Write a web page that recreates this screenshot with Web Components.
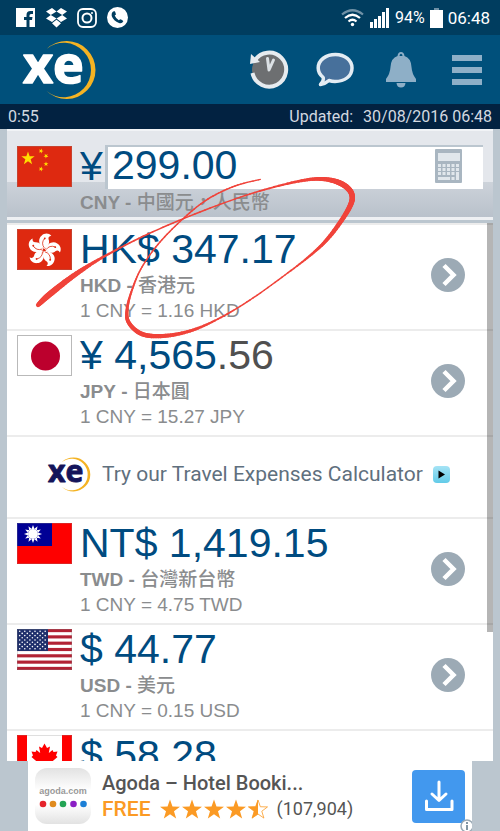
<!DOCTYPE html>
<html lang="zh-Hant">
<head>
<meta charset="utf-8">
<meta name="viewport" content="width=device-width, initial-scale=1">
<title>XE Currency</title>
<style>
html, body { margin: 0; height: 100%; }
body { background: #bbc6cf; font-family: Roboto, "Liberation Sans", "Noto Sans CJK TC", sans-serif; }
</style>
</head>
<body>
<xe-app></xe-app>
<script>
const define = (name, html, setup) => {
  const template = document.createElement('template');
  template.innerHTML = html;
  customElements.define(name, class extends HTMLElement {
    connectedCallback() {
      if (this.shadowRoot) return;
      const content = template.content.cloneNode(true);
      if (setup) setup(this, content);
      this.attachShadow({ mode: 'open' }).append(content);
    }
  });
};

/* ---------- flags ---------- */
const star = (cx, cy, r, turn = 0) => Array.from({ length: 10 }, (_, i) => {
  const a = (i * 36 - 90 + turn) * Math.PI / 180, d = i % 2 ? r * 0.4 : r;
  return (cx + d * Math.cos(a)).toFixed(2) + ',' + (cy + d * Math.sin(a)).toFixed(2);
}).join(' ');
const flags = {
  cn: `<path fill="#de2910" d="M0 0h55v41H0z"/><g fill="#ffde00"><polygon points="${star(11, 12.5, 7)}"/><polygon points="${star(24, 5, 2.6, 20)}"/><polygon points="${star(29, 10, 2.6, 40)}"/><polygon points="${star(29, 18, 2.6)}"/><polygon points="${star(24, 23, 2.6, 20)}"/></g>`,
  hk: `<path fill="#de2910" d="M0 0h55v41H0z"/>` + [0, 72, 144, 216, 288].map(a =>
    `<g transform="translate(27 21) rotate(${a + 8}) scale(1.05)"><path fill="#fff" d="M0-1C-6-4-7.500-10-4-13.500C-2-16 2-17 5-14.500C3-14 2-12.500 3-10.500C5-7 3-3 0-1Z"/><path d="M0-2Q-4-6-1-11" fill="none" stroke="#de2910" stroke-width=".7"/><circle cx="-.8" cy="-11" r=".9" fill="#de2910"/></g>`).join(''),
  jp: `<path fill="#fff" stroke="#ccc" stroke-width="2" d="M0 0h55v41H0z"/><circle cx="28.500" cy="21" r="14.500" fill="#bc002d"/>`,
  tw: `<path fill="#fe0000" d="M0 0h55v41H0z"/><path fill="#000095" d="M0 0h35v23H0z"/><g fill="#fff">` +
    Array.from({ length: 12 }, (_, i) => `<path transform="translate(16 11) rotate(${i * 30})" d="M-1.500-5L0-9L1.500-5z"/>`).join('') + `<circle cx="16" cy="11" r="5"/></g>`,
  us: `<path fill="#fff" d="M0 0h55v41H0z"/>` + [0, 1, 2, 3, 4, 5, 6].map(i => `<rect y="${i * 6.31}" width="55" height="3.15" fill="#b22234"/>`).join('') +
    `<path fill="#1f2f6b" d="M0 0h31v22H0z"/><g fill="#fff">` +
    Array.from({ length: 9 }, (_, r) => Array.from({ length: r % 2 ? 5 : 6 }, (_, c) => `<circle cx="${(r % 2 ? 5.2 : 2.7) + c * 5.1}" cy="${2.2 + r * 2.2}" r=".8"/>`).join('')).join('') + `</g>`,
  ca: `<path fill="#fff" d="M0 0h55v41H0z"/><path fill="#f00" d="M0 0h10v41H0zM45 0h10v41H45zM27.500 8.500L30 13L33 11.500L31.800 18L35.500 15L36.500 17L40.500 16.500L39 20.500L40.500 22L33.500 28L34 30.500L28 29.500V36H27V29.500L21 30.500L21.500 28L14.500 22L16 20.500L14.500 16.500L18.500 17L19.500 15L23.200 18L22 11.500L25 13Z"/>`
};
define('flag-icon', `<style>
:host { display: block; width: 55px; height: 41px; }
svg { display: block; width: 100%; height: 100%; }
</style><svg viewBox="0 0 55 41" aria-hidden="true"></svg>`, (el, root) => {
  root.querySelector('svg').innerHTML = flags[el.getAttribute('code')] +
    '<path fill="none" stroke="#8884" stroke-width="2" d="M0 0h55v41H0z"/>';
});

/* ---------- logo: lettering with a crescent behind it ---------- */
define('xe-logo', `<style>
:host { display: block; width: 72px; height: 60px; }
svg { display: block; width: 100%; height: 100%; overflow: visible; }
text { font: 700 52px "Open Sans", "Noto Sans", sans-serif; fill: var(--ink, #fff); stroke: var(--ink, #fff); stroke-width: 1.5px; stroke-linejoin: round; }
</style><svg viewBox="23 40 72 60" role="img" aria-label="xe"><path fill="#f4b323" d="M46.500 49A29 29 0 1 1 46.500 91A27.200 27.200 0 1 0 46.500 49Z"/><text x="23" y="83">xe</text></svg>`);

/* ---------- phone status bar ---------- */
define('status-bar', `<style>
:host { display: flex; align-items: center; justify-content: space-between; height: 35px; padding: 0 10px 0 16px; background: #003d5f; color: #fff; }
div { display: flex; align-items: center; }
.apps { gap: 10px; }
.state { gap: 5px; }
svg { display: block; }
.pct { font-size: 16px; }
.clock { font-size: 17px; }
</style>
<div class="apps">
<svg width="20" height="20" viewBox="0 0 20 20"><path fill="#fff" d="M0 0h19v19h-5.500v-7h2.500l.5-3h-3V7.500q0-1.500 1.500-1.500H17V3h-2.500Q10.500 3 10.500 7v2H8v3h2.500v7H0z"/></svg>
<svg width="21" height="20" viewBox="0 0 21 20"><path fill="#fff" d="M6 0L10.500 3.500L4.800 7L0 3.500zM15 0L21 3.500L16.200 7L10.500 3.500zM4.800 7L10.500 10.500L6 14L0 10.500zM16.200 7L21 10.500L15 14L10.500 10.500zM6 15.200L10.500 11.800L15 15.200L10.500 19.500z"/></svg>
<svg width="20" height="20" viewBox="0 0 20 20" fill="none" stroke="#fff"><rect x="1" y="1" width="18" height="18" rx="5" stroke-width="1.800"/><circle cx="10" cy="10" r="4.500" stroke-width="2"/><circle cx="15" cy="5" r="1" fill="#fff" stroke="none"/></svg>
<svg width="21" height="21" viewBox="0 0 21 21"><circle cx="10.500" cy="10.500" r="10.500" fill="#fff"/><path fill="#003d5f" d="M5.500 5L7.300 4Q8.300 4.200 9 7.500L7.700 8.600Q8.800 11.500 11.800 13.200L13.200 12.200Q16.500 13.500 16.300 14.300Q15 17 12 16Q6.500 14 4.700 9Q4.300 6.500 5.500 5z"/></svg>
</div>
<div class="state">
<svg width="23" height="18" viewBox="0 0 23 18" fill="none" stroke="#fff" stroke-width="2.200"><path stroke="#6f91a6" d="M1 5.500Q11.500-3 22 5.500"/><path d="M4 9Q11.500 2.500 19 9M7.500 12.500Q11.500 9 15.500 12.500"/><circle cx="11.500" cy="15.500" r="1.700" fill="#fff" stroke="none"/></svg>
<svg width="21" height="20" viewBox="0 0 21 20" fill="#fff"><path d="M1 14h3v6H1zM5 11h3v9H5zM9 8h3v12H9zM13 4h3v16h-3zM17 0h3v20h-3z"/></svg>
<span class="pct">94%</span>
<svg width="13" height="20" viewBox="0 0 13 20"><path fill="#fff" d="M0 2h13v18H0z"/><path fill="#6f91a6" d="M4 0h5v2H4z"/></svg>
<span class="clock">06:48</span>
</div>`);

/* ---------- app header ---------- */
define('app-header', `<style>
:host { display: flex; align-items: center; justify-content: space-between; height: 69px; padding: 0 13px 0 23px; background: #00507b; }
nav { display: flex; align-items: center; gap: 26px; }
button { display: flex; justify-content: center; width: 40px; border: 0; padding: 0; background: none; }
svg { display: block; flex: none; }
</style>
<xe-logo></xe-logo>
<nav>
<button aria-label="History"><svg width="40" height="40" viewBox="0 0 40 40"><circle cx="20" cy="20" r="17" fill="#6d6f71"/><path d="M3.500 23A17 17 0 1 0 5.500 11" fill="none" stroke="#e6ebef" stroke-width="4"/><path fill="#e6ebef" d="M2 4L1 14L11 12z"/><path d="M18.500 8.500L20 20L24.500 10" fill="none" stroke="#dce1e5" stroke-width="3" stroke-linecap="round" stroke-linejoin="round"/></svg></button>
<button aria-label="Feedback"><svg width="38" height="36" viewBox="0 0 38 36"><path fill="#47709b" stroke="#e3ecf3" stroke-width="3.500" stroke-linejoin="round" d="M4.500 32.500Q8 28.500 7.200 25.500Q2.200 21.500 2.200 16C2.200 8 10 2.500 19.500 2.500C29 2.500 36 8.500 36 16C36 24 29 29.500 19 29.500Q16 29.500 13 28.500Q9 32 4.500 32.500Z"/></svg></button>
<button aria-label="Alerts"><svg width="32" height="36" viewBox="0 0 32 36"><path fill="#8eafc7" fill-rule="evenodd" d="M16 0Q19 0 19.500 4Q26 6 26.500 15Q27 22 31 27V30H1V27Q5 22 5.500 15Q6 6 12.500 4Q13 0 16 0zM16 1.800Q14.500 2 14.500 4H17.500Q17.500 2 16 1.800zM11.500 31h9Q20 35.500 16 35.500T11.500 31z"/></svg></button>
<button aria-label="Menu"><svg width="30" height="30" viewBox="0 0 30 30"><path fill="#8eafc7" d="M0 0h30v6H0zM0 12h30v6H0zM0 24h30v6H0z"/></svg></button>
</nav>`);

define('update-strip', `<style>
:host { display: flex; align-items: center; justify-content: space-between; height: 25px; padding: 0 8px; background: #022241; color: #d3d9e0; font-size: 16px; }
div { display: flex; gap: 10px; }
</style><span>0:55</span><div><span>Updated:</span><time>30/08/2016 06:48</time></div>`);

/* ---------- base currency with its editable amount ---------- */
define('base-currency', `<style>
:host { display: grid; grid-template-columns: 55px 25px minmax(0, 1fr); column-gap: 8px; align-content: start; box-sizing: border-box; margin: 0 7px; padding: 14px 10px 0; height: 94px; border-top: 2px solid #f1f3f6; border-bottom: 3px solid #bbc6cf;
  background: linear-gradient(#e4e7ec 0 51px, #cdd3da 51px, #b9c1cb 86px, #eef0f3 86px); font-family: "Liberation Sans", "Noto Sans CJK TC", sans-serif; }
flag-icon { margin-top: 1px; }
label { font-size: 41px; line-height: 43px; color: #004b80; }
.field { display: flex; align-items: center; box-sizing: border-box; height: 44px; margin-left: -8px; padding: 0 21px 5px 4px; background: #fff; border-top: 2px solid #bbc6cf; border-left: 3px solid #bbc6cf; }
input { flex: 1; min-width: 0; height: 37px; border: 0; padding: 0; background: none; font: 41px/37px "Liberation Sans", sans-serif; color: #004b80; outline: 0; }
button { border: 0; padding: 0; background: none; }
svg { display: block; }
p { grid-column: 2 / 4; margin: 0; font-size: 19px; line-height: 28px; font-weight: 700; color: #8a8c8e; white-space: nowrap; }
span { font-weight: 500; }
</style>
<flag-icon code="cn"></flag-icon><label for="amount">¥</label>
<div class="field"><input id="amount" value="299.00" inputmode="decimal"><button aria-label="Calculator"><svg width="27" height="34" viewBox="0 0 27 34"><rect width="27" height="34" rx="1" fill="#a9b6c1"/><g fill="#e1e7ec"><path d="M3 4h22v8H3z"/><path d="M3 15h3v3H3zM7.500 15h3v3h-3zM12 15h3v3h-3zM16.500 15h3v3h-3zM21 15h3v3h-3zM3 19h3v3H3zM7.500 19h3v3h-3zM12 19h3v3h-3zM16.500 19h3v3h-3zM21 19h3v3h-3zM3 23h3v3H3zM7.500 23h3v3h-3zM12 23h3v3h-3zM16.500 23h3v3h-3zM21 23h3v8h-3zM3 28h12v3H3zM16.500 28h3v3h-3z"/></g></svg></button></div>
<p>CNY - <span>中國元，人民幣</span></p>`);

/* ---------- converted currency ---------- */
define('currency-row', `<style>
:host { display: flex; gap: 8px; box-sizing: border-box; height: 106px; padding: 4px 28px 0 10px; border-top: 2px solid #ececec; background: #fff; font-family: "Liberation Sans", "Noto Sans CJK TC", sans-serif; }
.info { flex: 1; min-width: 0; white-space: nowrap; }
.amount { font-size: 41px; line-height: 40px; color: #004b80; }
::slotted(i) { font-style: normal; color: #505050; }
.name { font-size: 19px; line-height: 26px; margin-top: 4px; font-weight: 700; color: #8a8c8e; }
.name span { font-weight: 500; }
.rate { font-size: 19px; line-height: 24px; color: #8a8c8e; }
button { align-self: flex-start; margin-top: 29px; padding: 0; border: 0; background: none; }
svg { display: block; }
</style>
<flag-icon></flag-icon>
<div class="info"><div class="amount"><slot></slot></div><div class="name"><b></b> - <span></span></div><div class="rate"></div></div>
<button aria-label="Details"><svg width="34" height="34" viewBox="0 0 34 34"><circle cx="17" cy="17" r="17" fill="#9caab5"/><path d="M13 7.500L22.500 17L13 26.500" fill="none" stroke="#fff" stroke-width="4.500"/></svg></button>`,
(el, root) => {
  root.querySelector('flag-icon').setAttribute('code', el.getAttribute('flag'));
  if (!el.hasAttribute('rate')) {
    root.querySelectorAll('.name, .rate, button').forEach(part => part.remove());
    return;
  }
  root.querySelector('b').textContent = el.getAttribute('code');
  root.querySelector('.name span').textContent = el.getAttribute('name');
  root.querySelector('.rate').textContent = '1 CNY = ' + el.getAttribute('rate') + ' ' + el.getAttribute('code');
});

define('promo-row', `<style>
:host { display: block; box-sizing: border-box; height: 82px; border-top: 2px solid #ececec; background: #fff; }
a { display: flex; align-items: center; height: 74px; padding: 0 43px 0 41px; text-decoration: none; color: #5f707e; font-size: 21px; white-space: nowrap; }
xe-logo { --ink: #14145a; flex: none; width: 42px; height: 35px; margin-right: 12px; }
svg { display: block; margin-left: auto; }
</style><a href="#travel"><xe-logo></xe-logo><span>Try our Travel Expenses Calculator</span><svg width="17" height="17" viewBox="0 0 17 17"><defs><linearGradient id="g" x2="0" y2="1"><stop stop-color="#a5e3f5"/><stop offset="1" stop-color="#62cbe8"/></linearGradient></defs><rect width="17" height="17" rx="4" fill="url(#g)"/><path d="M5.500 4.500L12 8.500L5.500 12.500z"/></svg></a>`);

/* ---------- bottom banner ---------- */
define('app-banner', `<style>
:host { display: flex; align-items: center; position: relative; overflow: hidden; box-sizing: border-box; flex: none; height: 70px; margin: 0 28px; padding: 0 7px; background: #fff; }
.icon { display: flex; flex-direction: column; align-items: center; justify-content: center; gap: 3px; width: 56px; height: 56px; border-radius: 12px; background: linear-gradient(#e2e2e2, #fff 40%, #fff 65%, #e2e2e2); color: #999; font: 700 9px/12px "Liberation Sans", sans-serif; }
svg { display: block; }
.copy { flex: 1; min-width: 0; margin-left: 11px; white-space: nowrap; }
h2 { margin: 0; font-size: 20px; line-height: 26px; font-weight: 500; color: #555; }
.line { display: flex; align-items: center; gap: 8px; font-size: 18px; line-height: 26px; color: #555; }
b { font-size: 21px; font-weight: 500; color: #fb9a24; }
button { padding: 0; border: 0; background: none; }
.about { position: absolute; right: -2px; bottom: -2px; }
</style>
<div class="icon"><span>agoda.com</span><svg width="50" height="8" viewBox="0 0 50 8"><circle cx="5" cy="4" r="3.300" fill="#e5242c"/><circle cx="15" cy="4" r="3.300" fill="#e08b1e"/><circle cx="25" cy="4" r="3.300" fill="#23a455"/><circle cx="35.500" cy="4" r="3.300" fill="#8a1fc4"/><circle cx="45.500" cy="4" r="3.300" fill="#1c7fd6"/></svg></div>
<div class="copy"><h2>Agoda – Hotel Booki...</h2><div class="line"><b>FREE</b><svg class="stars" width="110" height="20" viewBox="0 0 110 20" role="img" aria-label="4.5 stars"></svg><span>(107,904)</span></div></div>
<button aria-label="Install"><svg width="53" height="53" viewBox="0 0 53 53"><rect width="53" height="53" rx="4" fill="#4298ee"/><path d="M27 12V30M20 24L27 30.500L34 24M14.500 31V39.500H40V31" fill="none" stroke="#fff" stroke-width="3" stroke-linecap="round" stroke-linejoin="round"/></svg></button>
<button class="about" aria-label="About this ad"><svg width="14" height="14" viewBox="0 0 14 14"><circle cx="7" cy="7" r="6" fill="#fff" stroke="#9aa9b5" stroke-width="1.500"/><path fill="#8496a4" d="M6 3h2v2H6zM6 6h2v5H6z"/></svg></button>`,
(el, root) => {
  root.querySelector('.stars').innerHTML = [11, 33, 55, 77].map(x => `<polygon fill="#fb9a24" points="${star(x, 11, 10.5)}"/>`).join('') +
    `<clipPath id="h"><path d="M80 0h19v20H80z"/></clipPath><polygon clip-path="url(#h)" fill="#fb9a24" points="${star(99, 11, 10.5)}"/><polygon fill="none" stroke="#fb9a24" stroke-width=".8" points="${star(99, 11, 10)}"/>`;
});

/* ---------- hand-drawn red loop: x, y, pen width ---------- */
const ink = [[38,305,4],[50,294,6],[76,274,5],[105,256,2.5],[148,234,1.5],[200,212,1.5],[250,194,1.5],[295,182,2.5],[322,179,4],[342,184,5.5],[352,195,5.5],[348,210,5],[330,236,4],[312,254,2.5],[285,275,1.5],[250,300,1.5],[218,319,1.8],[190,331,3],[163,336,4],[142,334,4.5],[129,323,4],[127,310,3],[132,290,2],[142,267,1.5],[160,242,1.5],[185,217,1.5],[208,199,1.5],[235,186,1.5],[262,179,1.2]];
define('ink-mark', `<style>
:host { position: absolute; left: 0; top: 0; pointer-events: none; }
svg { display: block; }
</style><svg width="400" height="360" viewBox="0 0 400 360" fill="#f0433a" aria-hidden="true"></svg>`, (el, root) => {
  const at = i => ink[Math.max(0, Math.min(ink.length - 1, i))];
  const pts = [];
  for (let i = 0; i < ink.length - 1; i++) for (let s = 0; s < 10; s++) {
    const t = s / 10, [a, b, c, d] = [at(i - 1), at(i), at(i + 1), at(i + 2)];
    pts.push([0, 1, 2].map(k => 0.5 * (2 * b[k] + (c[k] - a[k]) * t + (2 * a[k] - 5 * b[k] + 4 * c[k] - d[k]) * t * t + (3 * b[k] - a[k] - 3 * c[k] + d[k]) * t * t * t)));
  }
  root.querySelector('svg').innerHTML = pts.slice(1).map((p, i) =>
    `<path stroke="#f0433a" stroke-linecap="round" stroke-width="${p[2].toFixed(2)}" d="M${pts[i][0].toFixed(2)} ${pts[i][1].toFixed(2)}L${p[0].toFixed(2)} ${p[1].toFixed(2)}"/>`).join('');
});

define('xe-app', `<style>
:host { display: flex; flex-direction: column; position: relative; height: 100vh; overflow: hidden; background: #bbc6cf; }
status-bar, app-header, update-strip, base-currency { flex: none; }
main { position: relative; flex: 1; min-height: 0; overflow: hidden; margin: 0 7px; background: #fff; }
.thumb { position: absolute; right: 0; top: 0; width: 6px; height: 76%; background: #0000004a; }
</style>
<status-bar></status-bar><app-header></app-header><update-strip></update-strip>
<base-currency></base-currency>
<main>
<currency-row flag="hk" code="HKD" name="香港元" rate="1.16">HK$ 347.17</currency-row>
<currency-row flag="jp" code="JPY" name="日本圓" rate="15.27">¥ 4,565<i>.56</i></currency-row>
<promo-row></promo-row>
<currency-row flag="tw" code="TWD" name="台灣新台幣" rate="4.75">NT$ 1,419.15</currency-row>
<currency-row flag="us" code="USD" name="美元" rate="0.15">$ 44.77</currency-row>
<currency-row flag="ca">$ 58.28</currency-row>
<div class="thumb"></div>
</main>
<app-banner></app-banner>
<ink-mark></ink-mark>`);
</script>
</body>
</html>
